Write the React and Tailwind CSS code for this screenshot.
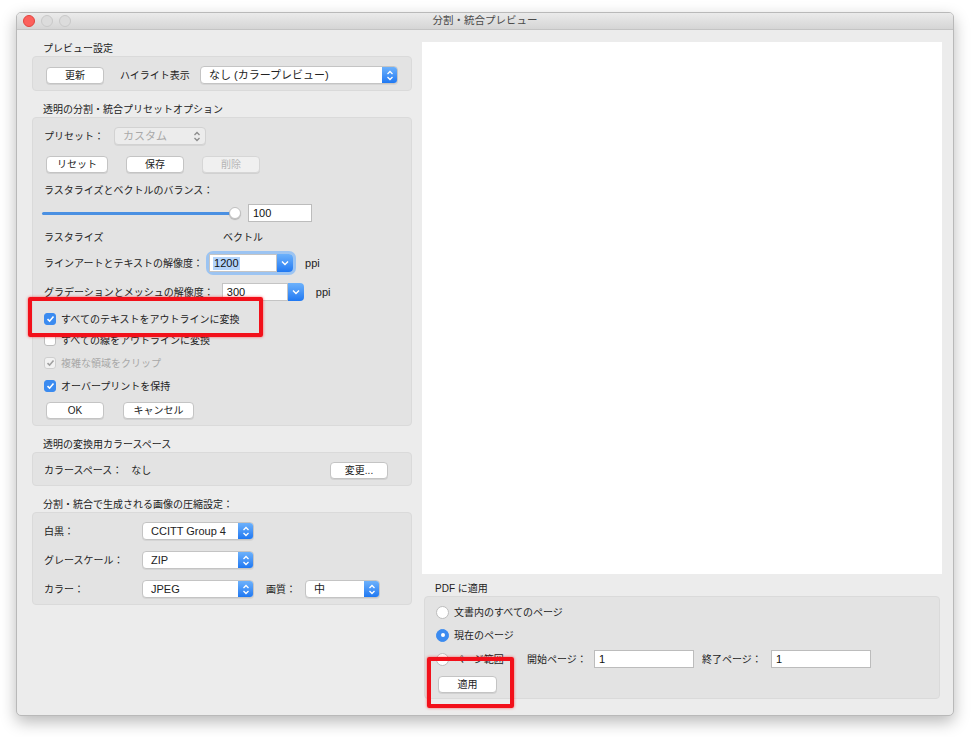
import React from 'react';

const font = { fontFamily: '"Liberation Sans", "Noto Sans CJK JP", sans-serif' };

const Btn = ({ w, children, disabled }) => (
  <div
    className={`flex h-[17px] ${w} shrink-0 items-center justify-center whitespace-nowrap rounded-[4px] border text-[10px] shadow-[0_1px_0_rgba(0,0,0,0.08)] ${
      disabled ? 'border-[#d6d6d6] bg-[#f0f0f0] text-[#b5b5b5]' : 'border-[#c4c4c4] bg-white text-[#222]'
    }`}
  >
    {children}
  </div>
);

const Stepper = ({ disabled }) => (
  <svg width="8" height="11" viewBox="0 0 8 11" fill="none" stroke={disabled ? '#8a8a8a' : '#fff'} strokeWidth="1.3">
    <path d="M1.5 4 L4 1.5 L6.5 4" />
    <path d="M1.5 7 L4 9.5 L6.5 7" />
  </svg>
);

const PopUp = ({ w, children, disabled }) => (
  <div
    className={`flex h-[18px] ${w} shrink-0 items-center overflow-hidden rounded-[4px] border shadow-[0_1px_0_rgba(0,0,0,0.06)] ${
      disabled ? 'border-[#d2d2d2] bg-[#ececec] text-[#a9a9a9]' : 'border-[#c4c4c4] bg-white text-[#222]'
    }`}
  >
    <span className="flex-1 truncate whitespace-nowrap pl-[8px] text-[11px]">{children}</span>
    {disabled ? (
      <div className="flex h-full w-[16px] items-center justify-center">
        <Stepper disabled />
      </div>
    ) : (
      <div className="flex h-full w-[15px] items-center justify-center bg-linear-to-b from-[#6cb1fb] to-[#1e78f2]">
        <Stepper />
      </div>
    )}
  </div>
);

const Combo = ({ w, children, focus }) => (
  <div className={`flex h-[18px] ${w} shrink-0 items-center rounded-[4px] ${focus ? 'shadow-[0_0_0_3px_#9cc4f2]' : ''}`}>
    <div className="flex h-full flex-1 items-center border border-[#c4c4c4] bg-white pl-[3px]">
      <span className={`px-[1px] text-[11px] leading-[13px] text-[#111] ${focus ? 'bg-[#b3d4fb]' : ''}`}>{children}</span>
    </div>
    <div className="flex h-full w-[16px] items-center justify-center rounded-r-[4px] bg-linear-to-b from-[#6cb1fb] to-[#1e78f2]">
      <svg width="8" height="6" viewBox="0 0 8 6" fill="none" stroke="#fff" strokeWidth="1.4">
        <path d="M1 1.5 L4 4.5 L7 1.5" />
      </svg>
    </div>
  </div>
);

const Check = ({ checked, disabled, children }) => (
  <div className="flex h-[20px] items-center gap-[5px]">
    <div
      className={`flex h-[12px] w-[12px] items-center justify-center rounded-[3px] border ${
        checked && !disabled
          ? 'border-[#3b8bf0] bg-[#3b8bf0]'
          : disabled
          ? 'border-[#cfcfcf] bg-[#f2f2f2]'
          : 'border-[#bdbdbd] bg-white'
      }`}
    >
      {checked && (
        <svg width="9" height="8" viewBox="0 0 9 8" fill="none" stroke={disabled ? '#a0a0a0' : '#fff'} strokeWidth="1.6">
          <path d="M1.5 4.2 L3.6 6.2 L7.5 1.5" />
        </svg>
      )}
    </div>
    <span className={`whitespace-nowrap text-[10px] ${disabled ? 'text-[#a8a8a8]' : 'text-[#222]'}`}>{children}</span>
  </div>
);

const Radio = ({ checked, children }) => (
  <div className="flex h-[20px] items-center gap-[5px]">
    <div
      className={`flex h-[13px] w-[13px] items-center justify-center rounded-full border ${
        checked ? 'border-[#3b8bf0] bg-[#3b8bf0]' : 'border-[#bdbdbd] bg-white'
      }`}
    >
      {checked && <div className="h-[4px] w-[4px] rounded-full bg-white" />}
    </div>
    <span className="whitespace-nowrap text-[10px] text-[#222]">{children}</span>
  </div>
);

const Label = ({ children }) => (
  <div className="mb-[1px] flex h-[14px] items-center whitespace-nowrap pl-[11px] text-[10px] text-[#222]">{children}</div>
);

const Group = ({ className = '', children }) => (
  <div className={`rounded-[4px] border border-[#dadada] bg-[#e3e3e3] ${className}`}>{children}</div>
);

const Row = ({ className = '', children }) => (
  <div className={`flex h-[20px] items-center whitespace-nowrap ${className}`}>{children}</div>
);

export default function App() {
  return (
    <div className="relative h-[737px] w-[971px] overflow-hidden bg-white" style={font}>
      <div className="ml-[16px] mt-[12px] flex h-[704px] w-[938px] flex-col overflow-hidden rounded-[5px] border border-[#b9b9b9] bg-[#ececec] shadow-[0_6px_16px_rgba(0,0,0,0.28)]">
        {/* title bar */}
        <div className="relative flex h-[17px] items-center justify-center border-b border-[#c4c4c4] bg-linear-to-b from-[#ebebeb] to-[#d5d5d5]">
          <div className="absolute left-[6px] top-[2px] flex gap-[6px]">
            <div className="h-[12px] w-[12px] rounded-full border border-[#e0443e] bg-[#fc605c]" />
            <div className="h-[12px] w-[12px] rounded-full border border-[#c8c8c8] bg-[#dcdcdc]" />
            <div className="h-[12px] w-[12px] rounded-full border border-[#c8c8c8] bg-[#dcdcdc]" />
          </div>
          <span className="text-[10.5px] text-[#4a4a4a]">分割・統合プレビュー</span>
        </div>

        <div className="flex flex-1">
          {/* left column */}
          <div className="ml-[15px] w-[380px] pt-[11px]">
            <Label>プレビュー設定</Label>
            <Group className="h-[35px] px-[13px] pt-[8px]">
              <Row>
                <Btn w="w-[58px]">更新</Btn>
                <span className="ml-[16px] w-[83px] text-[10px] text-[#222]">ハイライト表示</span>
                <PopUp w="w-[198px]">なし (カラープレビュー)</PopUp>
              </Row>
            </Group>

            <div className="mt-[11px]">
              <Label>透明の分割・統合プリセットオプション</Label>
              <Group className="h-[309px] px-[11px] pt-[8px]">
                <Row>
                  <span className="w-[70px] text-[10px] text-[#222]">プリセット：</span>
                  <PopUp w="w-[92px]" disabled>
                    カスタム
                  </PopUp>
                </Row>
                <Row className="mt-[8px] gap-[18px] pl-[2px]">
                  <Btn w="w-[62px]">リセット</Btn>
                  <Btn w="w-[58px]">保存</Btn>
                  <Btn w="w-[58px]" disabled>
                    削除
                  </Btn>
                </Row>
                <Row className="mt-[6px]">
                  <span className="text-[10px] text-[#222]">ラスタライズとベクトルのバランス：</span>
                </Row>
                <Row className="mt-[3px]">
                  <div className="relative ml-[-2px] h-[12px] w-[199px]">
                    <div className="absolute left-0 right-[2px] top-[4.5px] h-[3px] rounded-full bg-[#4a90e2]" />
                    <div className="absolute right-0 top-0 h-[12px] w-[12px] rounded-full border border-[#c0c0c0] bg-white shadow-[0_1px_1px_rgba(0,0,0,0.2)]" />
                  </div>
                  <div className="ml-[7px] flex h-[18px] w-[64px] items-center border border-[#bcbcbc] bg-white pl-[4px] text-[11px] text-[#111]">
                    100
                  </div>
                </Row>
                <Row className="mt-[4px] text-[10px] text-[#222]">
                  <span className="w-[179px]">ラスタライズ</span>
                  <span>ベクトル</span>
                </Row>
                <Row className="mt-[6px]">
                  <span className="text-[10px] text-[#222]">ラインアートとテキストの解像度：</span>
                  <div className="ml-[6px]">
                    <Combo w="w-[84px]" focus>
                      1200
                    </Combo>
                  </div>
                  <span className="ml-[12px] text-[11px] text-[#222]">ppi</span>
                </Row>
                <Row className="mt-[9px]">
                  <span className="text-[10px] text-[#222]">グラデーションとメッシュの解像度：</span>
                  <div className="ml-[8px]">
                    <Combo w="w-[82px]">300</Combo>
                  </div>
                  <span className="ml-[12px] text-[11px] text-[#222]">ppi</span>
                </Row>
                <div className="mt-[7px]">
                  <Check checked>すべてのテキストをアウトラインに変換</Check>
                </div>
                <div className="mt-[1px]">
                  <Check>すべての線をアウトラインに変換</Check>
                </div>
                <div className="mt-[3px]">
                  <Check checked disabled>
                    複雑な領域をクリップ
                  </Check>
                </div>
                <div className="mt-[3px]">
                  <Check checked>オーバープリントを保持</Check>
                </div>
                <Row className="mt-[4px] gap-[19px] pl-[2px]">
                  <Btn w="w-[58px]">OK</Btn>
                  <Btn w="w-[71px]">キャンセル</Btn>
                </Row>
              </Group>
            </div>

            <div className="mt-[11px]">
              <Label>透明の変換用カラースペース</Label>
              <Group className="h-[34px] px-[11px] pt-[7px]">
                <Row className="text-[10px] text-[#222]">
                  <span>カラースペース：</span>
                  <span className="ml-[9px]">なし</span>
                  <div className="ml-auto mr-[12px]">
                    <Btn w="w-[58px]">変更...</Btn>
                  </div>
                </Row>
              </Group>
            </div>

            <div className="mt-[11px]">
              <Label>分割・統合で生成される画像の圧縮設定：</Label>
              <Group className="h-[93px] px-[11px] pt-[8px]">
                <Row>
                  <span className="w-[98px] text-[10px] text-[#222]">白黒：</span>
                  <PopUp w="w-[112px]">CCITT Group 4</PopUp>
                </Row>
                <Row className="mt-[9px]">
                  <span className="w-[98px] text-[10px] text-[#222]">グレースケール：</span>
                  <PopUp w="w-[112px]">ZIP</PopUp>
                </Row>
                <Row className="mt-[9px]">
                  <span className="w-[98px] text-[10px] text-[#222]">カラー：</span>
                  <PopUp w="w-[112px]">JPEG</PopUp>
                  <span className="ml-[12px] w-[39px] text-[10px] text-[#222]">画質：</span>
                  <PopUp w="w-[75px]">中</PopUp>
                </Row>
              </Group>
            </div>
          </div>

          {/* right column */}
          <div className="ml-[10px] flex w-[520px] flex-col pt-[12px]">
            <div className="h-[532px] bg-white" />
            <div className="mt-[7px] px-[2px]">
              <Label>PDF に適用</Label>
              <Group className="h-[103px] pl-[11px] pt-[5px]">
                <Radio>文書内のすべてのページ</Radio>
                <div className="mt-[3px]">
                  <Radio checked>現在のページ</Radio>
                </div>
                <Row className="mt-[4px] text-[10px] text-[#222]">
                  <div className="w-[91px]">
                    <Radio>ページ範囲</Radio>
                  </div>
                  <span className="w-[67px]">開始ページ：</span>
                  <div className="flex h-[18px] w-[100px] items-center border border-[#bcbcbc] bg-white pl-[4px] text-[11px] text-[#111]">
                    1
                  </div>
                  <span className="ml-[8px] w-[69px]">終了ページ：</span>
                  <div className="flex h-[18px] w-[100px] items-center border border-[#bcbcbc] bg-white pl-[4px] text-[11px] text-[#111]">
                    1
                  </div>
                </Row>
                <Row className="mt-[5px] pl-[2px]">
                  <Btn w="w-[59px]">適用</Btn>
                </Row>
              </Group>
            </div>
          </div>
        </div>
      </div>

      {/* annotation highlights */}
      <div className="absolute left-[28px] top-[297px] h-[40px] w-[235px] rounded-[2px] border-[4px] border-[#f2101a] shadow-[0_0_3px_rgba(255,0,0,0.6)]" />
      <div className="absolute left-[427px] top-[657px] h-[51px] w-[87px] rounded-[2px] border-[4px] border-[#f2101a] shadow-[0_0_3px_rgba(255,0,0,0.6)]" />
    </div>
  );
}
